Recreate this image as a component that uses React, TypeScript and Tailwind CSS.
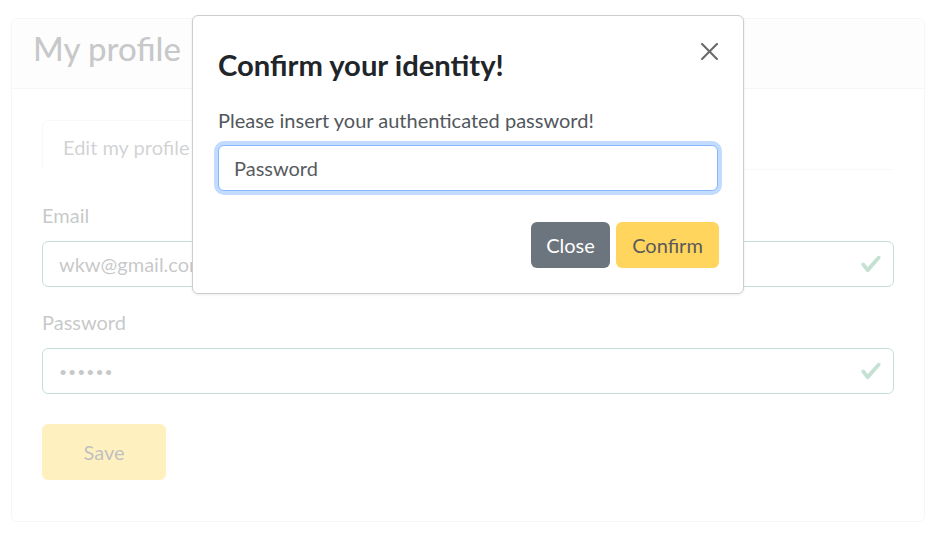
const CheckIcon = () => (
  <svg viewBox="0 0 8 8" className="w-[22px] h-[22px]">
    <path
      fill="#198754"
      d="M2.3 6.73.6 4.53c-.4-1.04.46-1.4 1.1-.8l1.1 1.4 3.4-3.8c.6-.63 1.6-.27 1.2.7l-4 4.6c-.43.5-.8.4-1.1.1z"
    />
  </svg>
);

const CloseIcon = () => (
  <svg viewBox="0 0 16 16" className="w-[17px] h-[17px]">
    <path
      fill="#6b6b6b"
      d="M.293.293a1 1 0 0 1 1.414 0L8 6.586 14.293.293a1 1 0 1 1 1.414 1.414L9.414 8l6.293 6.293a1 1 0 0 1-1.414 1.414L8 9.414l-6.293 6.293a1 1 0 0 1-1.414-1.414L6.586 8 .293 1.707a1 1 0 0 1 0-1.414z"
    />
  </svg>
);

type FieldProps = {
  label: string;
  type: string;
  value: string;
  className?: string;
  inputClass?: string;
};

const ValidField = ({ label, type, value, className, inputClass }: FieldProps) => (
  <div className={className}>
    <label className="block text-[20px] leading-[1.5] mb-[11px]">{label}</label>
    <div className="relative">
      <input
        type={type}
        defaultValue={value}
        readOnly
        className={`w-full h-[46px] rounded-[6px] border border-[#198754] bg-white pl-[16px] pr-[50px] text-[#212529] outline-none ${inputClass ?? ""}`}
      />
      <span className="absolute right-[12px] top-[12px]">
        <CheckIcon />
      </span>
    </div>
  </div>
);

const ProfilePage = () => (
  <div className="pl-[11px] pr-[14px] pt-[18px] pb-[15px]">
    <div className="rounded-[6px] border border-[#dcdcdc] bg-white">
      <div className="h-[70px] rounded-t-[6px] border-b border-[#dcdcdc] bg-[#f7f7f7] pl-[21px] pt-[10px]">
        <h3 className="text-[33px] leading-[1.2] font-medium text-[#212529]">My profile</h3>
      </div>
      <div className="px-[30px] pt-[31px] pb-[41px]">
        <ul className="flex border-b border-[#dee2e6]">
          <li className="-mb-px h-[50px] flex items-center rounded-t-[6px] border border-[#dee2e6] border-b-white bg-white px-[20px] pt-[3px] text-[20px] text-[#495057]">
            Edit my profile
          </li>
        </ul>
        <ValidField
          label="Email"
          type="email"
          value="wkw@gmail.com"
          className="mt-[30px]"
          inputClass="text-[20px]"
        />
        <ValidField
          label="Password"
          type="password"
          value="123456"
          className="mt-[20px]"
          inputClass="text-[14px] tracking-[1px]"
        />
        <button className="mt-[30px] w-[124px] h-[56px] rounded-[6px] bg-[#ffc107] text-[20px] text-black">
          Save
        </button>
      </div>
    </div>
  </div>
);

const ConfirmModal = () => (
  <div className="absolute left-[192px] top-[15px] w-[552px] rounded-[6px] border border-[#cdcdcd] bg-white pl-[25px] pr-[24px] pt-[31px] pb-[25px] shadow-[0_1px_3px_rgba(0,0,0,0.08)]">
    <div className="flex items-start justify-between">
      <h5 className="text-[29.2px] leading-[1.2] font-bold text-[#212529]">Confirm your identity!</h5>
      <button className="-mt-[4px] mr-[1px] p-0">
        <CloseIcon />
      </button>
    </div>
    <p className="mt-[23px] text-[20px] leading-[1.5] text-[#52575c]">
      Please insert your authenticated password!
    </p>
    <input
      type="password"
      placeholder="Password"
      className="mt-[10px] block w-[500px] h-[46px] rounded-[6px] border border-[#86b7fe] bg-white px-[15px] text-[20px] text-[#212529] placeholder:text-[#595c5f] outline-none shadow-[0_0_0_4px_#c2dbfe]"
    />
    <div className="mt-[31px] flex justify-end gap-[6px]">
      <button className="w-[79px] h-[46px] rounded-[6px] bg-[#6c757d] text-[20px] text-white">Close</button>
      <button className="w-[103px] h-[46px] rounded-[6px] bg-[#ffd55d] text-[20px] text-[#5a5a5a]">
        Confirm
      </button>
    </div>
  </div>
);

export default function App() {
  return (
    <div className="relative min-h-[537px] bg-white font-['Lato',sans-serif] text-[#212529]">
      <ProfilePage />
      <div className="absolute inset-0 bg-white/75" />
      <ConfirmModal />
    </div>
  );
}
